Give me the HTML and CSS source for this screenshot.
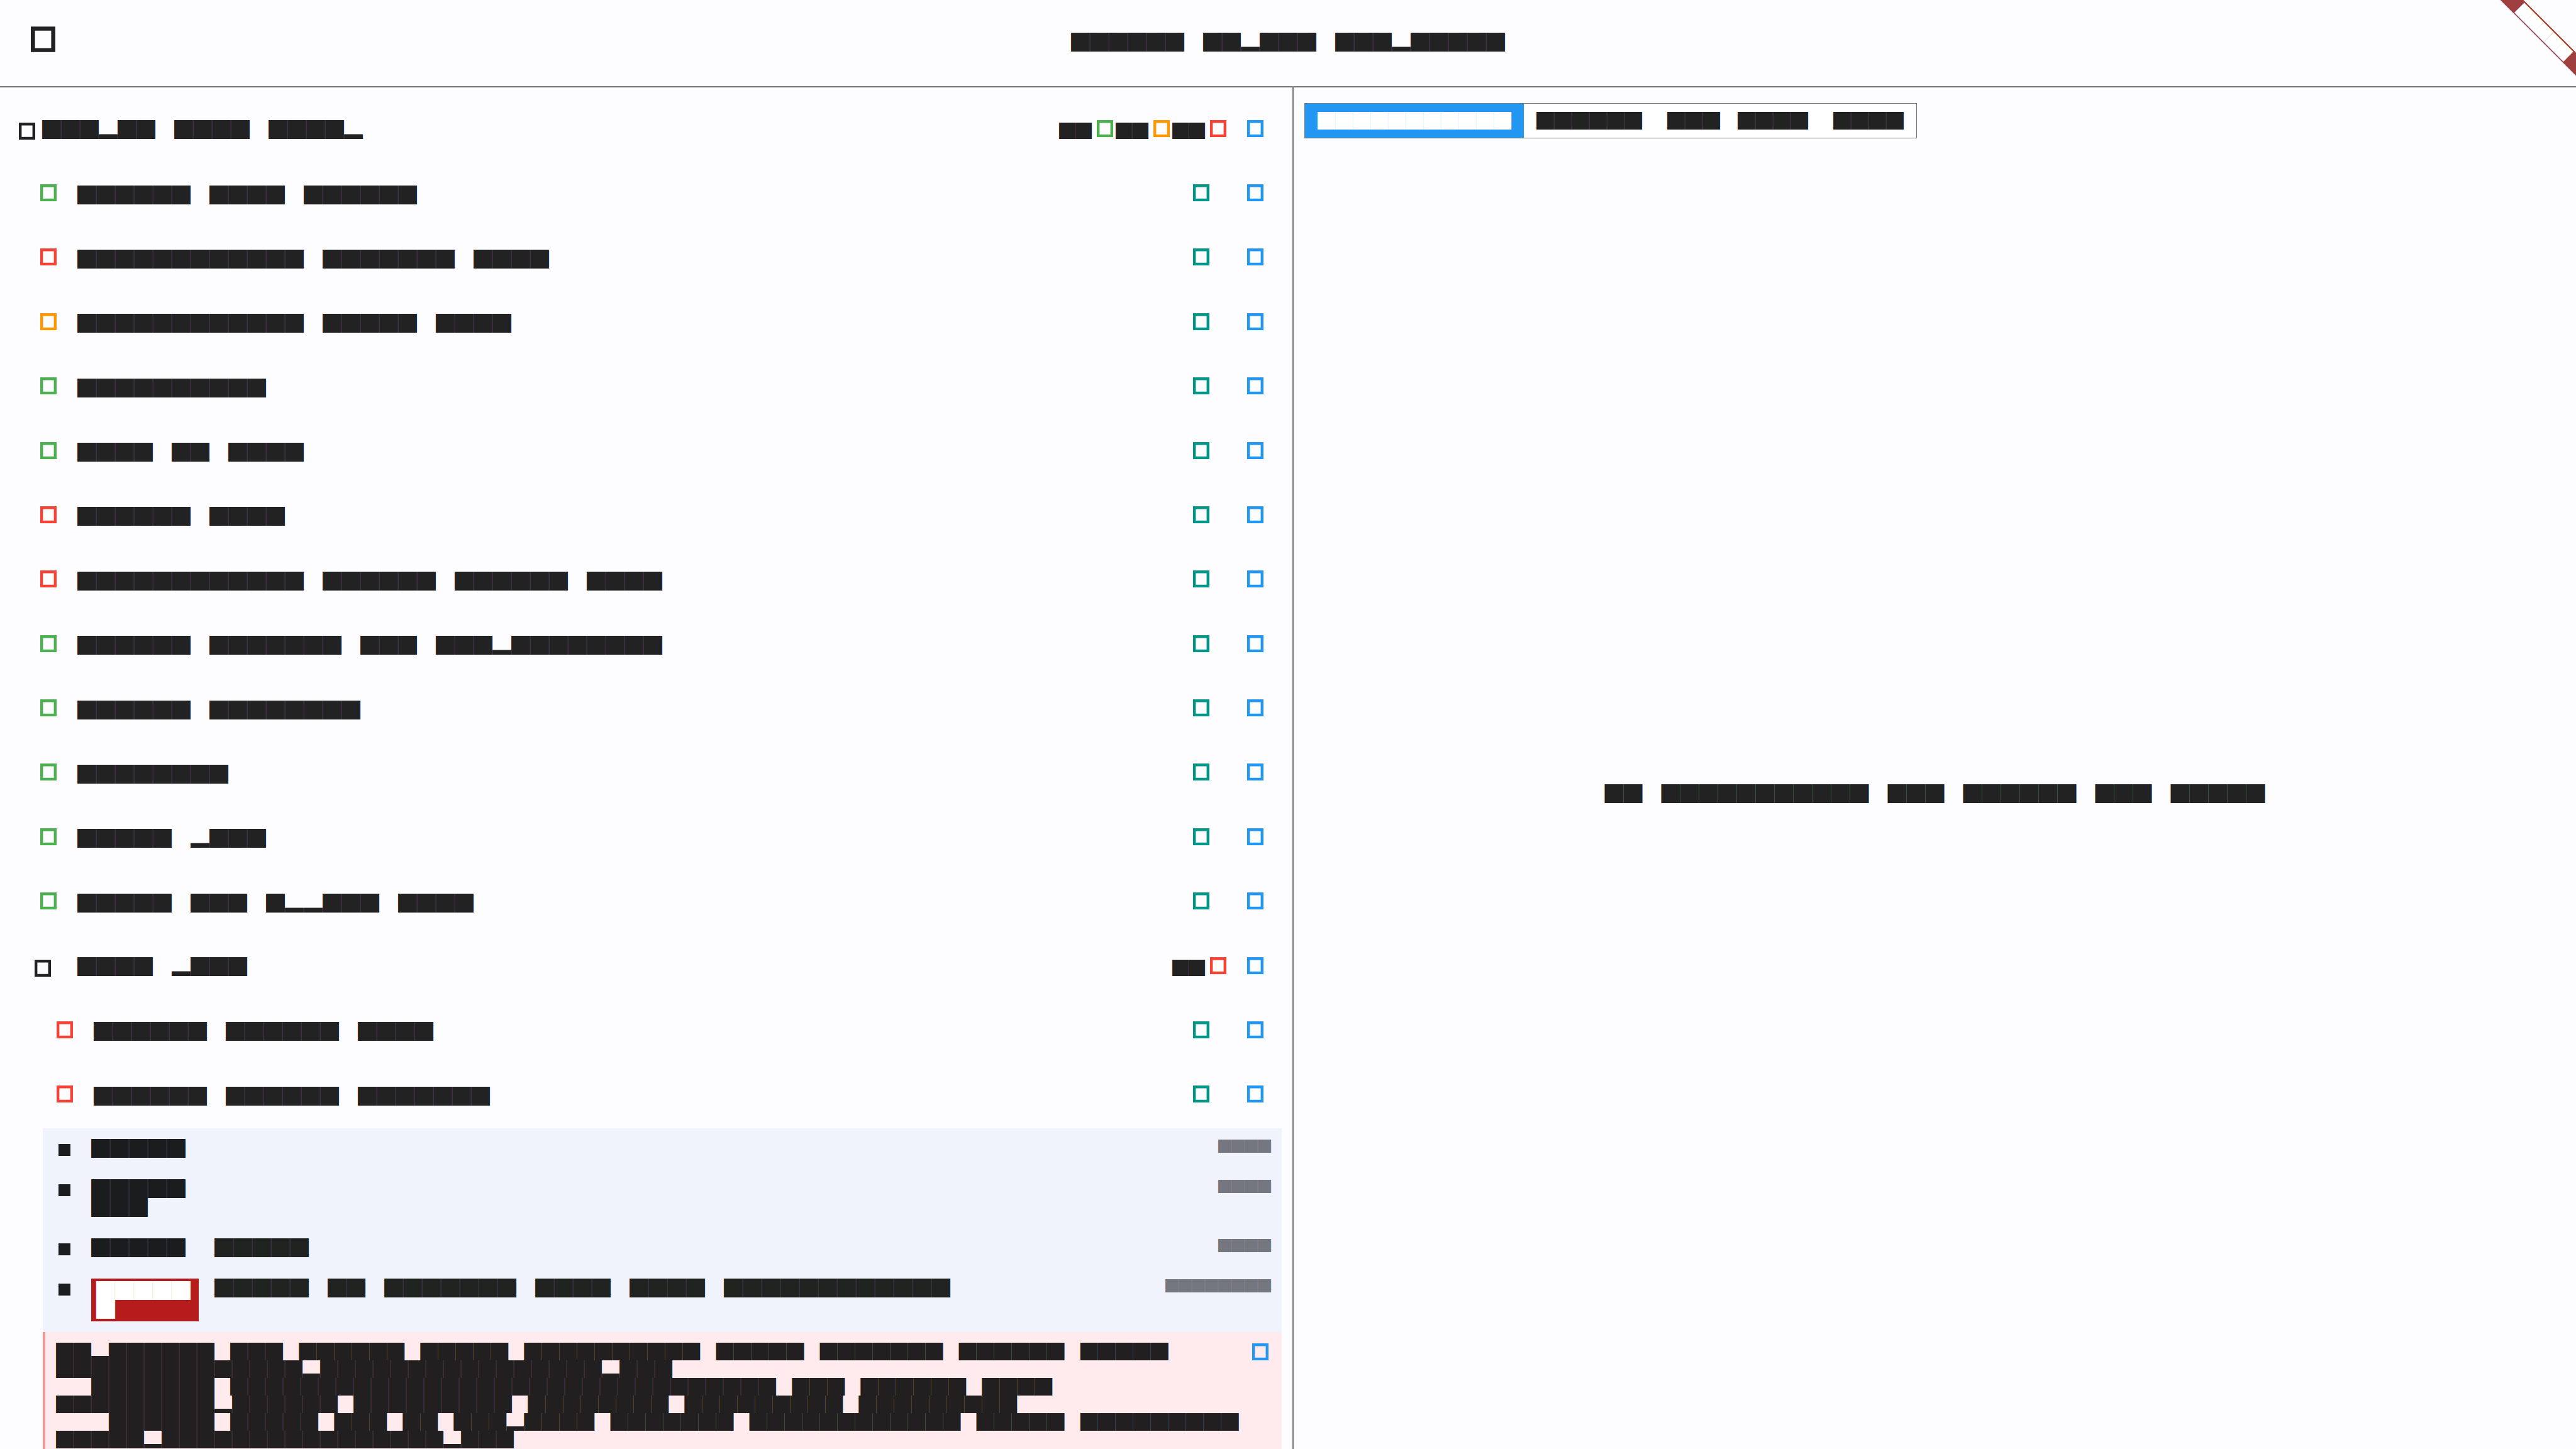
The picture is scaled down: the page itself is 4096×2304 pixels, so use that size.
FILE: index.html
```html
<!DOCTYPE html>
<html lang="en">
<head>
<meta charset="utf-8">
<title>Test runner</title>
<link rel="stylesheet" href="styles.css">
</head>
<body>
<svg class="defs" width="0" height="0" aria-hidden="true">
  <symbol id="box" viewBox="0 0 26 27">
    <path fill="currentColor" fill-rule="evenodd" d="M0 0H26V27H0ZM4.4 4.4V22.8H21.6V4.4Z"/>
  </symbol>
</svg>

<header class="bar">
  <button class="icon icon-lg dark" aria-label="Menu"><svg><use href="#box"/></svg></button>
  <h1 class="title">██████　██▂███　███▂█████</h1>
  <svg class="banner" viewBox="0 0 121 121" aria-hidden="true">
    <polygon class="banner-band" points="0.6,0 37.5,0 121,83.5 121,120.4"/>
    <text class="banner-text" transform="translate(69.8 51.2) rotate(45)" y="8.4" text-anchor="middle">█████</text>
  </svg>
</header>

<main class="split">
  <section class="left">
    <ul class="tree">
      <li class="row root">
        <button class="icon dark low" aria-label="Collapse"><svg><use href="#box"/></svg></button>
        <span class="name">███▂██　████　████▂</span>
        <span class="count">██</span><span class="icon green"><svg><use href="#box"/></svg></span>
        <span class="count">██</span><span class="icon orange"><svg><use href="#box"/></svg></span>
        <span class="count">██</span><span class="icon red"><svg><use href="#box"/></svg></span>
        <button class="icon blue run" aria-label="Run"><svg><use href="#box"/></svg></button>
      </li>
      <li class="row">
        <span class="icon green"><svg><use href="#box"/></svg></span>
        <span class="name">██████　████　██████</span>
        <button class="icon teal" aria-label="Open"><svg><use href="#box"/></svg></button>
        <button class="icon blue" aria-label="Run"><svg><use href="#box"/></svg></button>
      </li>
      <li class="row">
        <span class="icon red"><svg><use href="#box"/></svg></span>
        <span class="name">████████████　███████　████</span>
        <button class="icon teal" aria-label="Open"><svg><use href="#box"/></svg></button>
        <button class="icon blue" aria-label="Run"><svg><use href="#box"/></svg></button>
      </li>
      <li class="row">
        <span class="icon orange"><svg><use href="#box"/></svg></span>
        <span class="name">████████████　█████　████</span>
        <button class="icon teal" aria-label="Open"><svg><use href="#box"/></svg></button>
        <button class="icon blue" aria-label="Run"><svg><use href="#box"/></svg></button>
      </li>
      <li class="row">
        <span class="icon green"><svg><use href="#box"/></svg></span>
        <span class="name">██████████</span>
        <button class="icon teal" aria-label="Open"><svg><use href="#box"/></svg></button>
        <button class="icon blue" aria-label="Run"><svg><use href="#box"/></svg></button>
      </li>
      <li class="row">
        <span class="icon green"><svg><use href="#box"/></svg></span>
        <span class="name">████　██　████</span>
        <button class="icon teal" aria-label="Open"><svg><use href="#box"/></svg></button>
        <button class="icon blue" aria-label="Run"><svg><use href="#box"/></svg></button>
      </li>
      <li class="row">
        <span class="icon red"><svg><use href="#box"/></svg></span>
        <span class="name">██████　████</span>
        <button class="icon teal" aria-label="Open"><svg><use href="#box"/></svg></button>
        <button class="icon blue" aria-label="Run"><svg><use href="#box"/></svg></button>
      </li>
      <li class="row">
        <span class="icon red"><svg><use href="#box"/></svg></span>
        <span class="name">████████████　██████　██████　████</span>
        <button class="icon teal" aria-label="Open"><svg><use href="#box"/></svg></button>
        <button class="icon blue" aria-label="Run"><svg><use href="#box"/></svg></button>
      </li>
      <li class="row">
        <span class="icon green"><svg><use href="#box"/></svg></span>
        <span class="name">██████　███████　███　███▂████████</span>
        <button class="icon teal" aria-label="Open"><svg><use href="#box"/></svg></button>
        <button class="icon blue" aria-label="Run"><svg><use href="#box"/></svg></button>
      </li>
      <li class="row">
        <span class="icon green"><svg><use href="#box"/></svg></span>
        <span class="name">██████　████████</span>
        <button class="icon teal" aria-label="Open"><svg><use href="#box"/></svg></button>
        <button class="icon blue" aria-label="Run"><svg><use href="#box"/></svg></button>
      </li>
      <li class="row">
        <span class="icon green"><svg><use href="#box"/></svg></span>
        <span class="name">████████</span>
        <button class="icon teal" aria-label="Open"><svg><use href="#box"/></svg></button>
        <button class="icon blue" aria-label="Run"><svg><use href="#box"/></svg></button>
      </li>
      <li class="row">
        <span class="icon green"><svg><use href="#box"/></svg></span>
        <span class="name">█████　▂███</span>
        <button class="icon teal" aria-label="Open"><svg><use href="#box"/></svg></button>
        <button class="icon blue" aria-label="Run"><svg><use href="#box"/></svg></button>
      </li>
      <li class="row">
        <span class="icon green"><svg><use href="#box"/></svg></span>
        <span class="name">█████　███　█▂▂███　████</span>
        <button class="icon teal" aria-label="Open"><svg><use href="#box"/></svg></button>
        <button class="icon blue" aria-label="Run"><svg><use href="#box"/></svg></button>
      </li>
      <li class="row group">
        <button class="icon dark low" aria-label="Collapse"><svg><use href="#box"/></svg></button>
        <span class="name">████　▂███</span>
        <span class="count">██</span><span class="icon red"><svg><use href="#box"/></svg></span>
        <button class="icon blue run" aria-label="Run"><svg><use href="#box"/></svg></button>
      </li>
      <li class="row nested">
        <span class="icon red"><svg><use href="#box"/></svg></span>
        <span class="name">██████　██████　████</span>
        <button class="icon teal" aria-label="Open"><svg><use href="#box"/></svg></button>
        <button class="icon blue" aria-label="Run"><svg><use href="#box"/></svg></button>
      </li>
      <li class="row nested">
        <span class="icon red"><svg><use href="#box"/></svg></span>
        <span class="name">██████　██████　███████</span>
        <button class="icon teal" aria-label="Open"><svg><use href="#box"/></svg></button>
        <button class="icon blue" aria-label="Run"><svg><use href="#box"/></svg></button>
      </li>
    </ul>

    <ol class="steps">
      <li class="step"><i class="bullet"></i><span class="keyword">█████</span><span class="detail"></span><time class="took">████</time></li>
      <li class="step"><i class="bullet"></i><span class="keyword">█████<br>███</span><span class="detail"></span><time class="took">████</time></li>
      <li class="step"><i class="bullet"></i><span class="keyword">█████</span><span class="detail">█████</span><time class="took">████</time></li>
      <li class="step"><i class="bullet"></i><span class="keyword badge">█████<br>█</span><span class="detail">█████　██　███████　████　████　████████████</span><time class="took">████████</time></li>
    </ol>

    <div class="error">
<pre class="log">██▂██████    ███    ██████    █████    ██████████    █████    ███████    ██████    █████
██████████████▂████████████████▂███
　　███████    ███████████████████████████████    ███    ██████    ████
█████████▂██████    █████████    ████████    █████████    █████████
　　　██████    █████    ███    ██    ███▂████    ███████    ████████████    █████    █████████
█████▂████████████████▂███</pre>
      <button class="icon blue" aria-label="Copy"><svg><use href="#box"/></svg></button>
    </div>
  </section>

  <section class="right">
    <div class="tabs">
      <button class="tab active">███████████</button>
      <button class="tab">██████</button>
      <button class="tab">███　████</button>
      <button class="tab">████</button>
    </div>
    <p class="empty">██　███████████　███　██████　███　█████</p>
  </section>
</main>
</body>
</html>
```
FILE: styles.css
```css
* {
  box-sizing: border-box;
}

body {
  margin: 0;
  height: 100vh;
  overflow: hidden;
  display: flex;
  flex-direction: column;
  background: #fdfdff;
  color: #222222;
  font: 30px/30px "Noto Sans CJK JP", "Noto Sans CJK SC", sans-serif;
  white-space: nowrap;
}

button {
  margin: 0;
  padding: 0;
  border: 0;
  background: none;
  color: inherit;
  font: inherit;
}

ul, ol, p, h1, pre {
  margin: 0;
  padding: 0;
  list-style: none;
}

.defs {
  position: absolute;
}

/* icons */
.icon {
  display: block;
  flex: none;
  width: 26px;
  height: 27px;
}

.icon svg {
  display: block;
  width: 100%;
  height: 100%;
}

.icon-lg {
  width: 39px;
  height: 41px;
}

.dark { color: #222222; }
.green { color: #4caf50; }
.orange { color: #ff9800; }
.red { color: #f44336; }
.teal { color: #009688; }
.blue { color: #2196f3; }

/* header */
.bar {
  position: relative;
  flex: none;
  display: grid;
  grid-template-columns: 1fr auto 1fr;
  align-items: center;
  height: 139px;
  padding: 0 49px 12px;
  border-bottom: 2px solid #74777f;
}

.title {
  padding-top: 5px;
  font-size: 30px;
  line-height: 30px;
  font-weight: 400;
}

.banner {
  position: absolute;
  top: 0;
  right: 0;
  width: 121px;
  height: 121px;
}

.banner-band { fill: #a03f40; }

.banner-text {
  fill: #ffffff;
  font-size: 22px;
}

/* layout */
.split {
  flex: 1;
  min-height: 0;
  display: grid;
  grid-template-columns: minmax(0, calc(50% + 9px)) minmax(0, 1fr);
}

.left {
  display: flex;
  flex-direction: column;
  min-height: 0;
  overflow: hidden;
  border-right: 2px solid #74777f;
}

/* tree */
.tree {
  flex: none;
  display: grid;
  grid-auto-rows: 1fr;
  min-height: 1655px;
  padding-top: 17px;
}

.row {
  display: flex;
  align-items: center;
  gap: 60px;
  padding: 0 46px 6px 64px;
}

.name {
  flex: 1;
  margin-left: -27px;
  padding-top: 2px;
}

.low {
  margin-top: 8px;
}

.count {
  font-size: 26px;
  padding-top: 5px;
}

.root,
.group {
  gap: 0;
}

.root {
  padding-left: 30px;
}

.group {
  padding-left: 55px;
}

.nested {
  padding-left: 90px;
}

.root > .name {
  margin-left: 11px;
  padding-top: 0;
}

.group > .name {
  margin-left: 42px;
  padding-top: 0;
}

.count + .icon {
  margin: 0 4px 0 8px;
}

.icon + .run {
  margin-left: 29px;
}

/* steps */
.steps {
  flex: none;
  margin: 0 17px 0 68px;
  background: #f0f3fb;
}

.step {
  display: grid;
  grid-template-columns: 19px 171px minmax(0, 1fr) auto;
  align-items: start;
  padding: 15px 17px 19px 25px;
}

.bullet {
  width: 19px;
  height: 19px;
  margin-top: 10px;
  background: #1a1c1e;
}

.keyword {
  margin-left: 33px;
  color: #1a1c1e;
}

.badge {
  width: 171px;
  margin-top: 2px;
  margin-bottom: -2px;
  padding: 2px 12px 6px 8px;
  background: #b71c1c;
  color: #ffffff;
}

.detail {
  margin-left: 58px;
  color: #202220;
}

.took {
  padding-top: 1px;
  color: #74777f;
  font-size: 21px;
  line-height: 22px;
}

/* error output */
.error {
  flex: 1 0 auto;
  display: flex;
  align-items: flex-start;
  justify-content: space-between;
  margin: 0 17px 0 68px;
  padding: 16px 21px 0 17px;
  border-left: 4px solid #ef9a9a;
  background: #ffebee;
  color: #221f20;
}

.error .icon {
  margin-top: 2px;
}

.log {
  font: 28px/28px "Noto Sans CJK JP", "Noto Sans CJK SC", sans-serif;
}

/* right pane */
.right {
  display: flex;
  flex-direction: column;
  align-items: flex-start;
  padding: 25px 0 0 17px;
}

.tabs {
  display: flex;
  height: 56px;
  border: 1px solid #74777f;
  background: #ffffff;
}

.tab {
  padding: 0 20px 2px;
  font-size: 28px;
  line-height: 28px;
}

.tab.active {
  background: #2196f3;
  color: #ffffff;
}

.empty {
  flex: 1;
  align-self: stretch;
  display: flex;
  align-items: center;
  justify-content: center;
  margin-left: -17px;
  padding-bottom: 5px;
}
```
